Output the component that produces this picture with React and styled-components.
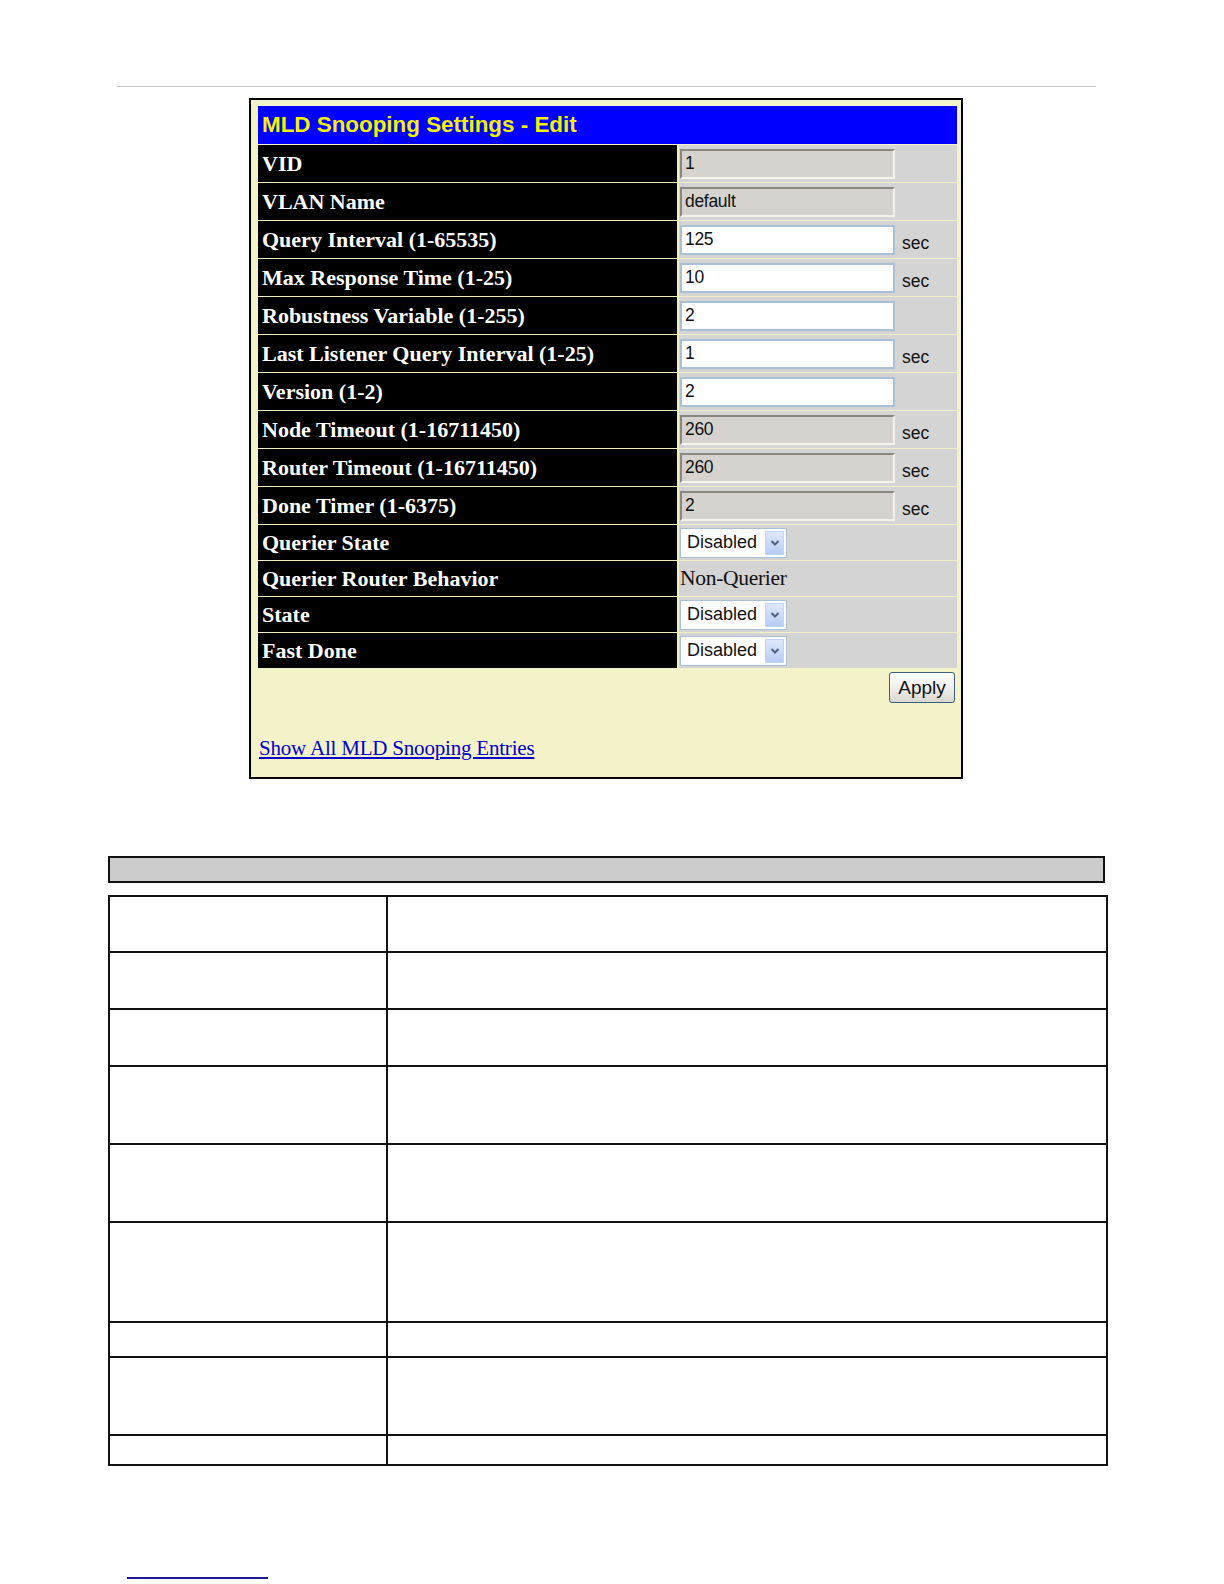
import React from 'react'
import styled, { createGlobalStyle } from 'styled-components'

const Global = createGlobalStyle`
  html, body {
    margin: 0;
    overflow: hidden;
  }
  body {
    background: #ffffff;
    font-family: "Liberation Serif", serif;
  }
`

const Page = styled.div`
  width: 1224px;
  height: 1584px;
  overflow: hidden;
  display: flex;
  flex-direction: column;
`

const TopRule = styled.div`
  margin: 86px 0 0 117px;
  width: 979px;
  height: 1px;
  background: #c4c4c4;
`

const Panel = styled.div`
  margin: 11px 0 0 249px;
  width: 714px;
  box-sizing: border-box;
  border: 2px solid #000;
  background: #f4f2c8;
  padding: 6px 4px 16px 7px;
  display: flex;
  flex-direction: column;
`

const Title = styled.div`
  height: 38px;
  background: #0000ff;
  color: #f2f200;
  font-family: "Liberation Sans", Arial, sans-serif;
  font-weight: bold;
  font-size: 22.4px;
  line-height: 38px;
  padding-left: 4px;
`

const Grid = styled.div`
  display: grid;
  grid-template-columns: 419px 278px;
  column-gap: 2px;
  row-gap: 1px;
  margin-top: 1px;
  background: #f1efc4;
`

const Label = styled.div`
  height: ${p => p.$h}px;
  background: #000;
  color: #fff;
  font-weight: bold;
  font-size: 22px;
  display: flex;
  align-items: center;
  padding-left: 4px;
  white-space: nowrap;
`

const Value = styled.div`
  height: ${p => p.$h}px;
  background: #d4d4d4;
  display: flex;
  align-items: center;
  padding-left: 1px;
  font-size: 21.5px;
  letter-spacing: -0.3px;
  color: #111;
`

const TextBox = styled.div`
  width: 215px;
  height: 30px;
  box-sizing: border-box;
  font-family: "Liberation Sans", Arial, sans-serif;
  font-size: 17.5px;
  color: #111;
  display: flex;
  align-items: center;
  padding-left: 3px;
  background: ${p => (p.$disabled ? '#d6d3ce' : '#fff')};
  border: 2px solid;
  border-color: ${p =>
    p.$disabled ? '#8a8780 #f4f2ea #f4f2ea #8a8780' : '#a9bfd6'};
`

const Unit = styled.span`
  font-family: "Liberation Sans", Arial, sans-serif;
  font-size: 17.5px;
  letter-spacing: 0;
  color: #111;
  margin-left: 7px;
  align-self: flex-end;
  padding-bottom: 4px;
`

const Select = styled.div`
  width: 107px;
  height: 30px;
  box-sizing: border-box;
  border: 1px solid #a9bfd6;
  background: #fff;
  display: flex;
  align-items: center;
  justify-content: space-between;
  padding: 2px;
  font-family: "Liberation Sans", Arial, sans-serif;
  font-size: 18px;
  letter-spacing: 0;
  color: #111;
  span {
    padding-left: 4px;
  }
`

const Arrow = styled.div`
  width: 19px;
  height: 24px;
  background: linear-gradient(#dfe8fb, #b8cbf4);
  border: 1px solid #c3d3f4;
  box-sizing: border-box;
  display: flex;
  align-items: center;
  justify-content: center;
`

const Actions = styled.div`
  display: flex;
  justify-content: flex-end;
  padding: 4px 2px 0 0;
`

const Button = styled.button`
  width: 66px;
  height: 31px;
  border: 1px solid #3c5f7e;
  border-radius: 3px;
  background: linear-gradient(#ffffff, #ecebe6 60%, #d9d7cf);
  font-family: "Liberation Sans", Arial, sans-serif;
  font-size: 19px;
  color: #111;
  padding: 0;
`

const Link = styled.a`
  margin: 33px 0 0 1px;
  color: #0000cc;
  font-size: 21px;
  text-decoration: underline;
  letter-spacing: -0.2px;
`

const Bar = styled.div`
  margin: 77px 0 0 108px;
  width: 997px;
  height: 27px;
  box-sizing: border-box;
  border: 2px solid #111;
  background: #cccccc;
`

const Table = styled.table`
  margin: 12px 0 0 108px;
  width: 1000px;
  border-collapse: collapse;
  td {
    border: 2px solid #111;
    padding: 0;
  }
  td:first-child {
    width: 276px;
  }
`

const FootRule = styled.div`
  margin: 111px 0 0 127px;
  width: 141px;
  height: 2px;
  background: #1a1a99;
`

const rows = [
  { label: 'VID', input: '1', disabled: true },
  { label: 'VLAN Name', input: 'default', disabled: true },
  { label: 'Query Interval (1-65535)', input: '125', unit: 'sec' },
  { label: 'Max Response Time (1-25)', input: '10', unit: 'sec' },
  { label: 'Robustness Variable (1-255)', input: '2' },
  { label: 'Last Listener Query Interval (1-25)', input: '1', unit: 'sec' },
  { label: 'Version (1-2)', input: '2' },
  { label: 'Node Timeout (1-16711450)', input: '260', disabled: true, unit: 'sec' },
  { label: 'Router Timeout (1-16711450)', input: '260', disabled: true, unit: 'sec' },
  { label: 'Done Timer (1-6375)', input: '2', disabled: true, unit: 'sec' },
  { label: 'Querier State', select: 'Disabled' },
  { label: 'Querier Router Behavior', text: 'Non-Querier' },
  { label: 'State', select: 'Disabled' },
  { label: 'Fast Done', select: 'Disabled' },
]

const tableHeights = [56, 57, 57, 78, 78, 100, 35, 78, 30]

const Chevron = () => (
  <svg width="10" height="8" viewBox="0 0 10 8">
    <path d="M1.5 2 L5 5.5 L8.5 2" fill="none" stroke="#4d6185" strokeWidth="2" />
  </svg>
)

export default function App() {
  return (
    <Page>
      <Global />
      <TopRule />
      <Panel>
        <Title>MLD Snooping Settings - Edit</Title>
        <Grid>
          {rows.map(r => {
            const h = r.input !== undefined ? 37 : 35
            return (
              <React.Fragment key={r.label}>
                <Label $h={h}>{r.label}</Label>
                <Value $h={h}>
                  {r.input !== undefined && (
                    <TextBox $disabled={r.disabled}>{r.input}</TextBox>
                  )}
                  {r.unit && <Unit>{r.unit}</Unit>}
                  {r.select && (
                    <Select>
                      <span>{r.select}</span>
                      <Arrow><Chevron /></Arrow>
                    </Select>
                  )}
                  {r.text}
                </Value>
              </React.Fragment>
            )
          })}
        </Grid>
        <Actions>
          <Button>Apply</Button>
        </Actions>
        <Link href="#">Show All MLD Snooping Entries</Link>
      </Panel>
      <Bar />
      <Table>
        <tbody>
          {tableHeights.map((h, i) => (
            <tr key={i} style={{ height: h }}>
              <td />
              <td />
            </tr>
          ))}
        </tbody>
      </Table>
      <FootRule />
    </Page>
  )
}
